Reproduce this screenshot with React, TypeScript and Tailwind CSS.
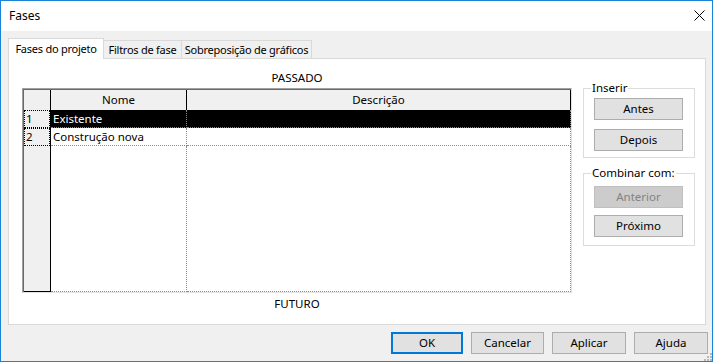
export default function App() {
    const font = "font-['Segoe_UI','Noto_Sans',sans-serif]";

    return (
        <div className={`w-[715px] h-[363px] bg-white text-[11.5px] leading-[16px] text-black whitespace-nowrap ${font}`}>
            <div className="relative w-[713px] h-[362px] border border-[#1883d7] bg-[#f0f0f0] flex flex-col">
                {/* title bar */}
                <div className="h-[30px] bg-white flex items-center justify-between pl-[8px] pr-[7px]">
                    <span className="text-[12px]">Fases</span>
                    <svg width="11" height="11" viewBox="0 0 11 11" className="mb-[1px]">
                        <path d="M0.5 0.5 L10.5 10.5 M10.5 0.5 L0.5 10.5" stroke="#000" strokeWidth="1" />
                    </svg>
                </div>

                <div className="flex-1 flex flex-col pl-[7px] pr-[4px] pt-[7px]">
                    {/* tabs */}
                    <div className="flex items-end h-[20px] mr-[2px] text-[11px] tracking-[-0.25px]">
                        <div className="relative z-10 w-[96px] h-[21px] -mb-[1px] bg-white border border-b-0 border-[#d9d9d9] flex items-center justify-center pb-[1px]">
                            Fases do projeto
                        </div>
                        <div className="w-[78px] h-[18px] border-t border-r border-[#d9d9d9] flex items-center justify-center">
                            Filtros de fase
                        </div>
                        <div className="w-[130px] h-[18px] border-t border-r border-[#d9d9d9] flex items-center justify-center">
                            Sobreposição de gráficos
                        </div>
                    </div>

                    {/* panel */}
                    <div className="h-[267px] mr-[2px] bg-white border border-[#d9d9d9] flex">
                        <div className="pl-[13px] pt-[11px] flex flex-col">
                            <div className="h-[16px] mb-[2px] text-center">PASSADO</div>

                            <div className="w-[550px] h-[205px] border border-l-[#a0a0a0] border-t-[#a0a0a0] border-r-[#e3e3e3] border-b-[#e3e3e3] flex flex-col">
                                <div className="flex-1 border-l border-t border-[#696969] flex flex-col">
                                    {/* header row */}
                                    <div className="h-[20px] flex bg-[#f0f0f0]">
                                        <div className="w-[27px] border-r border-black" />
                                        <div className="w-[136px] border-r border-black flex items-center justify-center">Nome</div>
                                        <div className="flex-1 border-r border-black flex items-center justify-center">Descrição</div>
                                    </div>

                                    {/* row 1 */}
                                    <div className="h-[18px] flex">
                                        <div className="w-[27px] border-r border-black bg-[#f0f0f0]">
                                            <div className="h-full border border-dotted border-black pl-[1px] leading-[15px]">1</div>
                                        </div>
                                        <div className="w-[136px] bg-black text-white border-r border-b border-dotted border-[#8a8a8a] pl-[2px] leading-[17px]">Existente</div>
                                        <div className="flex-1 bg-black border-r border-b border-dotted border-[#8a8a8a]" />
                                    </div>

                                    {/* row 2 */}
                                    <div className="h-[18px] flex">
                                        <div className="w-[27px] border-r border-black bg-[#f0f0f0]">
                                            <div className="h-full border border-dotted border-black pl-[1px] leading-[15px]">2</div>
                                        </div>
                                        <div className="w-[136px] border-r border-b border-dotted border-[#8a8a8a] pl-[2px] leading-[17px]">Construção nova</div>
                                        <div className="flex-1 border-r border-b border-dotted border-[#8a8a8a]" />
                                    </div>

                                    {/* empty area */}
                                    <div className="flex-1 flex">
                                        <div className="w-[27px] bg-[#f0f0f0] border-r border-b border-black" />
                                        <div className="w-[136px] border-r border-b border-dotted border-[#8a8a8a]" />
                                        <div className="flex-1 border-r border-b border-dotted border-[#8a8a8a]" />
                                    </div>
                                </div>
                            </div>

                            <div className="h-[16px] mt-[3px] text-center">FUTURO</div>
                        </div>

                        <div className="ml-[11px] pt-[21px] w-[112px] flex flex-col">
                            <fieldset className="border border-[#dcdcdc] pb-[6px]">
                                <legend className="ml-[7px] px-[1px]">Inserir</legend>
                                <button className="ml-[10px] mt-[2px] w-[89px] h-[22px] bg-[#e1e1e1] border border-[#adadad] flex items-center justify-center">Antes</button>
                                <button className="ml-[10px] mt-[9px] w-[89px] h-[22px] bg-[#e1e1e1] border border-[#adadad] flex items-center justify-center">Depois</button>
                            </fieldset>

                            <fieldset className="mt-[7px] border border-[#dcdcdc] pb-[8px]">
                                <legend className="ml-[7px] px-[1px]">Combinar com:</legend>
                                <button disabled className="ml-[10px] mt-[5px] w-[89px] h-[22px] bg-[#cccccc] border border-[#bfbfbf] text-[#838383] flex items-center justify-center">Anterior</button>
                                <button className="ml-[10px] mt-[7px] w-[89px] h-[22px] bg-[#e1e1e1] border border-[#adadad] flex items-center justify-center">Próximo</button>
                            </fieldset>
                        </div>
                    </div>

                    {/* footer buttons */}
                    <div className="mt-[7px] flex justify-end gap-[8px]">
                        <button className="w-[72px] h-[22px] bg-[#e1e1e1] border-2 border-[#0078d7] flex items-center justify-center">OK</button>
                        <button className="w-[73px] h-[22px] bg-[#e1e1e1] border border-[#adadad] flex items-center justify-center">Cancelar</button>
                        <button className="w-[74px] h-[22px] bg-[#e1e1e1] border border-[#adadad] flex items-center justify-center">Aplicar</button>
                        <button className="w-[74px] h-[22px] bg-[#e1e1e1] border border-[#adadad] flex items-center justify-center">Ajuda</button>
                    </div>
                </div>

                {/* size grip */}
                <svg width="8" height="8" viewBox="0 0 8 8" className="absolute right-[0px] bottom-[0px]">
                    <rect x="6" y="0" width="2" height="2" fill="#b8b8b8" />
                    <rect x="3" y="3" width="2" height="2" fill="#b8b8b8" />
                    <rect x="6" y="3" width="2" height="2" fill="#b8b8b8" />
                    <rect x="0" y="6" width="2" height="2" fill="#b8b8b8" />
                    <rect x="3" y="6" width="2" height="2" fill="#b8b8b8" />
                    <rect x="6" y="6" width="2" height="2" fill="#b8b8b8" />
                </svg>
            </div>
        </div>
    );
}
